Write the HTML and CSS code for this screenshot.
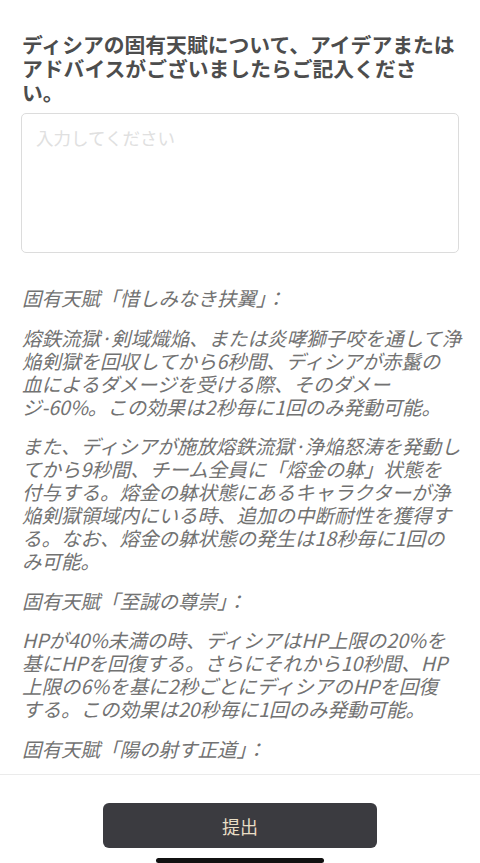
FILE: index.html
```html
<!DOCTYPE html>
<html lang="ja">
<head>
	<meta charset="UTF-8">
	<meta name="viewport" content="width=device-width, initial-scale=1">
	<title>固有天賦について</title>
	<link rel="stylesheet" href="styles.css">
</head>
<body>
	<div class="page">
		<div class="main">
			<h1 class="question">ディシアの固有天賦について、アイデアまたは<br>アドバイスがございましたらご記入くださ<br>い。</h1>
			<textarea class="answer" placeholder="入力してください"></textarea>

			<div class="desc">
				<p>固有天賦「惜しみなき扶翼」：</p>
				<p>熔鉄流獄·剣域熾焔、または炎哮獅子咬を通して浄<br>焔剣獄を回収してから6秒間、ディシアが赤鬣の<br>血によるダメージを受ける際、そのダメー<br>ジ-60%。この効果は2秒毎に1回のみ発動可能。</p>
				<p>また、ディシアが施放熔鉄流獄·浄焔怒涛を発動し<br>てから9秒間、チーム全員に「熔金の躰」状態を<br>付与する。熔金の躰状態にあるキャラクターが浄<br>焔剣獄領域内にいる時、追加の中断耐性を獲得す<br>る。なお、熔金の躰状態の発生は18秒毎に1回の<br>み可能。</p>
				<p>固有天賦「至誠の尊崇」：</p>
				<p>HPが40%未満の時、ディシアはHP上限の20%を<br>基にHPを回復する。さらにそれから10秒間、HP<br>上限の6%を基に2秒ごとにディシアのHPを回復<br>する。この効果は20秒毎に1回のみ発動可能。</p>
				<p>固有天賦「陽の射す正道」：</p>
			</div>
		</div>

		<div class="footer">
			<button class="btn-submit">提出</button>
			<div class="home-bar"></div>
		</div>
	</div>
</body>
</html>
```

FILE: styles.css
```css
* {
	margin: 0;
	padding: 0;
	box-sizing: border-box;
}

html, body {
	width: 100%;
	height: 100%;
	background: #fff;
	font-family: "Noto Sans CJK JP", "Noto Sans", sans-serif;
}

.page {
	height: 863px;
	display: flex;
	flex-direction: column;
	overflow: hidden;
}

.main {
	flex: 1;
	overflow: hidden;
	padding: 32px 21px 0 22px;
}

.question {
	font-size: 20.8px;
	font-weight: 700;
	line-height: 24px;
	color: #4d4d4d;
	white-space: nowrap;
	margin-bottom: 9px;
}

.answer {
	display: block;
	width: 438px;
	margin-left: -1px;
	height: 140px;
	padding: 12px 14px;
	border: 1px solid #dcdcdc;
	border-radius: 5px;
	resize: none;
	outline: none;
	font-family: inherit;
	font-size: 17.5px;
	line-height: 24px;
	color: #333;
}

.answer::placeholder {
	color: #e0e0e0;
}

.desc {
	margin-top: 33px;
}

.desc p {
	font-size: 19.5px;
	font-style: italic;
	line-height: 23px;
	color: #727272;
	white-space: nowrap;
	margin-bottom: 16.5px;
}

.footer {
	height: 89px;
	border-top: 1px solid #ebebeb;
	display: flex;
	flex-direction: column;
	align-items: center;
}

.btn-submit {
	margin-top: 28px;
	width: 274px;
	height: 48px;
	border: none;
	border-radius: 6px;
	background: #3b3b40;
	color: #e9dec6;
	font-family: inherit;
	font-size: 18px;
	cursor: pointer;
}

.home-bar {
	margin-top: 10px;
	width: 168px;
	height: 5px;
	border-radius: 3px;
	background: #111;
}
```
